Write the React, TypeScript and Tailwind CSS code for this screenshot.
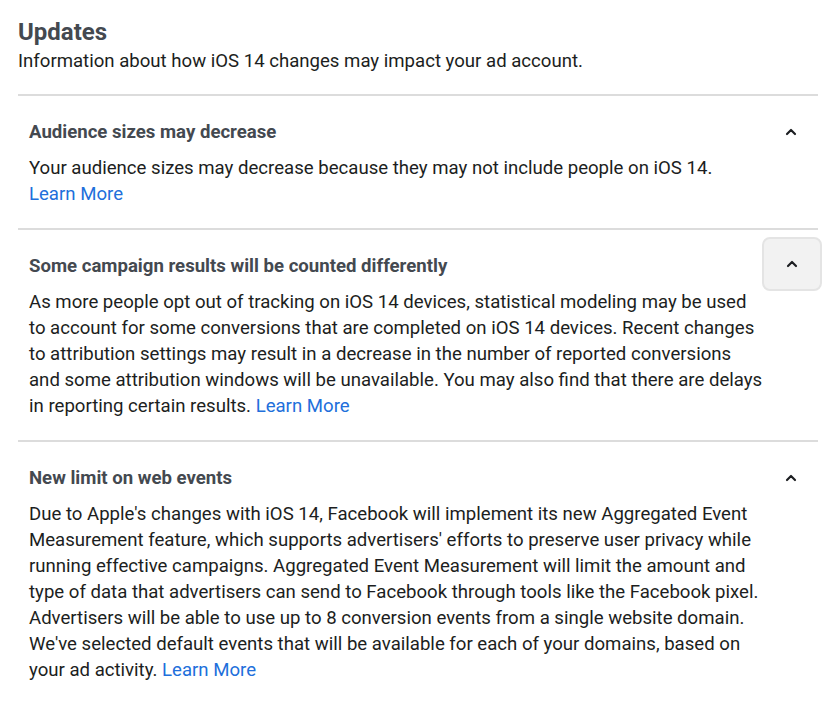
import { ChevronUp } from "lucide-react";

const sections = [
  {
    title: "Audience sizes may decrease",
    body: "Your audience sizes may decrease because they may not include people on iOS 14.",
    breakLink: true,
    focused: false,
  },
  {
    title: "Some campaign results will be counted differently",
    body: "As more people opt out of tracking on iOS 14 devices, statistical modeling may be used to account for some conversions that are completed on iOS 14 devices. Recent changes to attribution settings may result in a decrease in the number of reported conversions and some attribution windows will be unavailable. You may also find that there are delays in reporting certain results.",
    breakLink: false,
    focused: true,
  },
  {
    title: "New limit on web events",
    body: "Due to Apple's changes with iOS 14, Facebook will implement its new Aggregated Event Measurement feature, which supports advertisers' efforts to preserve user privacy while running effective campaigns. Aggregated Event Measurement will limit the amount and type of data that advertisers can send to Facebook through tools like the Facebook pixel. Advertisers will be able to use up to 8 conversion events from a single website domain. We've selected default events that will be available for each of your domains, based on your ad activity.",
    breakLink: false,
    focused: false,
  },
];

export default function App() {
  return (
    <div
      className="w-[836px] h-[706px] bg-white overflow-hidden"
      style={{ fontFamily: "Roboto, 'Liberation Sans', sans-serif" }}
    >
      <div className="pl-[18px] pr-[18px] pt-[16px]">
        {/* Header */}
        <h1 className="text-[24px] leading-[32px] font-bold text-[#444950]">Updates</h1>
        <p className="text-[18.6px] leading-[26px] text-[#1c1e21]">
          Information about how iOS 14 changes may impact your ad account.
        </p>

        <div className="mt-[20px]">
          {sections.map((s, i) => (
            <div key={i}>
              <div className="h-[2px] bg-[#dcdcdc]" />
              <div className="pl-[11px] pr-[11px] pt-[23px] pb-[21px]">
                <div className="relative flex items-center justify-between">
                  <h3 className="text-[18.6px] leading-[26px] font-bold text-[#444950]">{s.title}</h3>
                  {s.focused ? (
                    <div className="absolute right-[-15px] top-[-16px] w-[60px] h-[54px] rounded-[8px] bg-[#f2f2f2] border-2 border-[#e4e4e4] flex items-center justify-center">
                      <ChevronUp className="w-[16px] h-[16px] text-[#1c1e21]" strokeWidth={3.2} />
                    </div>
                  ) : (
                    <ChevronUp className="w-[16px] h-[16px] text-[#1c1e21] mr-[8px]" strokeWidth={3.2} />
                  )}
                </div>
                <p className="mt-[10px] pr-[42px] text-[18.6px] leading-[26px] text-[#1c1e21]">
                  {s.body}
                  {s.breakLink ? <br /> : " "}
                  <a href="#" className="text-[#216fdb]">Learn More</a>
                </p>
              </div>
            </div>
          ))}
        </div>
      </div>
    </div>
  );
}
